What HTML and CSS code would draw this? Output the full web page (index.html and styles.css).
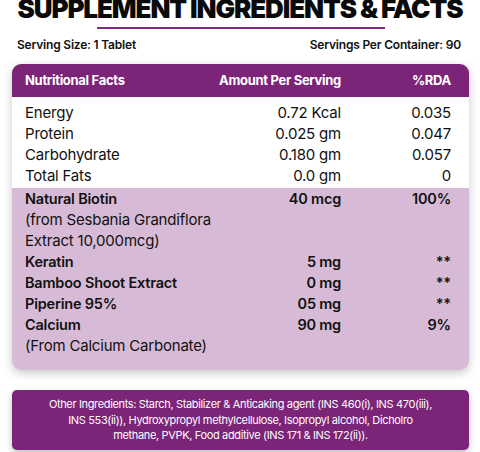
FILE: index.html
```html
<!DOCTYPE html>
<html>
<head>
<meta charset="utf-8">
<link rel="stylesheet" href="styles.css">
</head>
<body>
<div class="page">
  <h1 class="title">SUPPLEMENT INGREDIENTS &amp; FACTS</h1>
  <div class="rule"></div>
  <div class="serving">
    <span>Serving Size: 1 Tablet</span>
    <span>Servings Per Container: 90</span>
  </div>
  <div class="card">
    <div class="row head">
      <span>Nutritional Facts</span>
      <span class="num">Amount Per Serving</span>
      <span class="num">%RDA</span>
    </div>
    <div class="plain">
      <div class="row"><span>Energy</span><span class="num">0.72 Kcal</span><span class="num">0.035</span></div>
      <div class="row"><span>Protein</span><span class="num">0.025 gm</span><span class="num">0.047</span></div>
      <div class="row"><span>Carbohydrate</span><span class="num">0.180 gm</span><span class="num">0.057</span></div>
      <div class="row"><span>Total Fats</span><span class="num">0.0 gm</span><span class="num">0</span></div>
    </div>
    <div class="lilac">
      <div class="row bold first"><span>Natural Biotin<span class="sub">(from Sesbania Grandiflora<br>Extract 10,000mcg)</span></span><span class="num">40 mcg</span><span class="num">100%</span></div>
      <div class="row bold"><span>Keratin</span><span class="num">5 mg</span><span class="num">**</span></div>
      <div class="row bold"><span>Bamboo Shoot Extract</span><span class="num">0 mg</span><span class="num">**</span></div>
      <div class="row bold"><span>Piperine 95%</span><span class="num">05 mg</span><span class="num">**</span></div>
      <div class="row bold"><span>Calcium<span class="sub">(From Calcium Carbonate)</span></span><span class="num">90 mg</span><span class="num">9%</span></div>
    </div>
  </div>
  <div class="other">
    Other Ingredients: Starch, Stabilizer &amp; Anticaking agent (INS 460(i), INS 470(iii),<br>
    INS 553(ii)), Hydroxypropyl methylcellulose, Isopropyl alcohol, Dicholro<br>
    methane, PVPK, Food additive (INS 171 &amp; INS 172(ii)).
  </div>
</div>
</body>
</html>
```

FILE: styles.css
```css
* { box-sizing: border-box; }
html, body { margin: 0; padding: 0; background: #fff; }
body {
  font-family: Inter, "Noto Sans", sans-serif;
  color: #111;
  width: 480px;
  height: 452px;
  overflow: hidden;
}
.page { padding: 0; }
.title {
  margin: -8px 0 0 0;
  font-size: 26px;
  font-weight: 900;
  line-height: 34px;
  text-align: center;
  white-space: nowrap;
  letter-spacing: -1.1px;
  color: #0a0a0a;
}
.rule {
  width: 288px;
  height: 2px;
  background: #7e2a80;
  margin: 1px 0 0 97px;
}
.serving {
  display: flex;
  justify-content: space-between;
  padding: 0 19px 0 17px;
  margin-top: 9px;
  font-size: 12px;
  font-weight: 600;
  line-height: 14px;
  letter-spacing: -0.2px;
  color: #111;
}
.card {
  margin: 12px 11px 0 12px;
  border-radius: 9px;
  overflow: hidden;
  box-shadow: 0 3px 10px rgba(0,0,0,0.22);
  background: #fff;
}
.row {
  display: grid;
  grid-template-columns: 1fr auto 110px;
  padding: 0 18px 0 13px;
  font-size: 15px;
  line-height: 21px;
  letter-spacing: -0.2px;
}
.num { text-align: right; }
.head {
  background: #7b2478;
  color: #fff;
  font-weight: 700;
  font-size: 13px;
  line-height: 33px;
  letter-spacing: -0.3px;
}
.plain { padding: 5px 0 9px; }
.lilac {
  background: #d7bbd6;
  padding: 0 0 14px;
}
.bold { font-weight: 600; font-size: 14.5px; }
.first { margin-top: -7px; }
.sub {
  display: block;
  font-weight: 400;
  font-size: 15px;
}
.other {
  margin: 20px 11px 0 12px;
  background: #7b2478;
  color: #fff;
  border-radius: 5px;
  box-shadow: 0 3px 6px rgba(0,0,0,0.25);
  text-align: center;
  font-size: 11px;
  line-height: 15.5px;
  letter-spacing: -0.35px;
  padding: 7px 6px 6px;
}
```
